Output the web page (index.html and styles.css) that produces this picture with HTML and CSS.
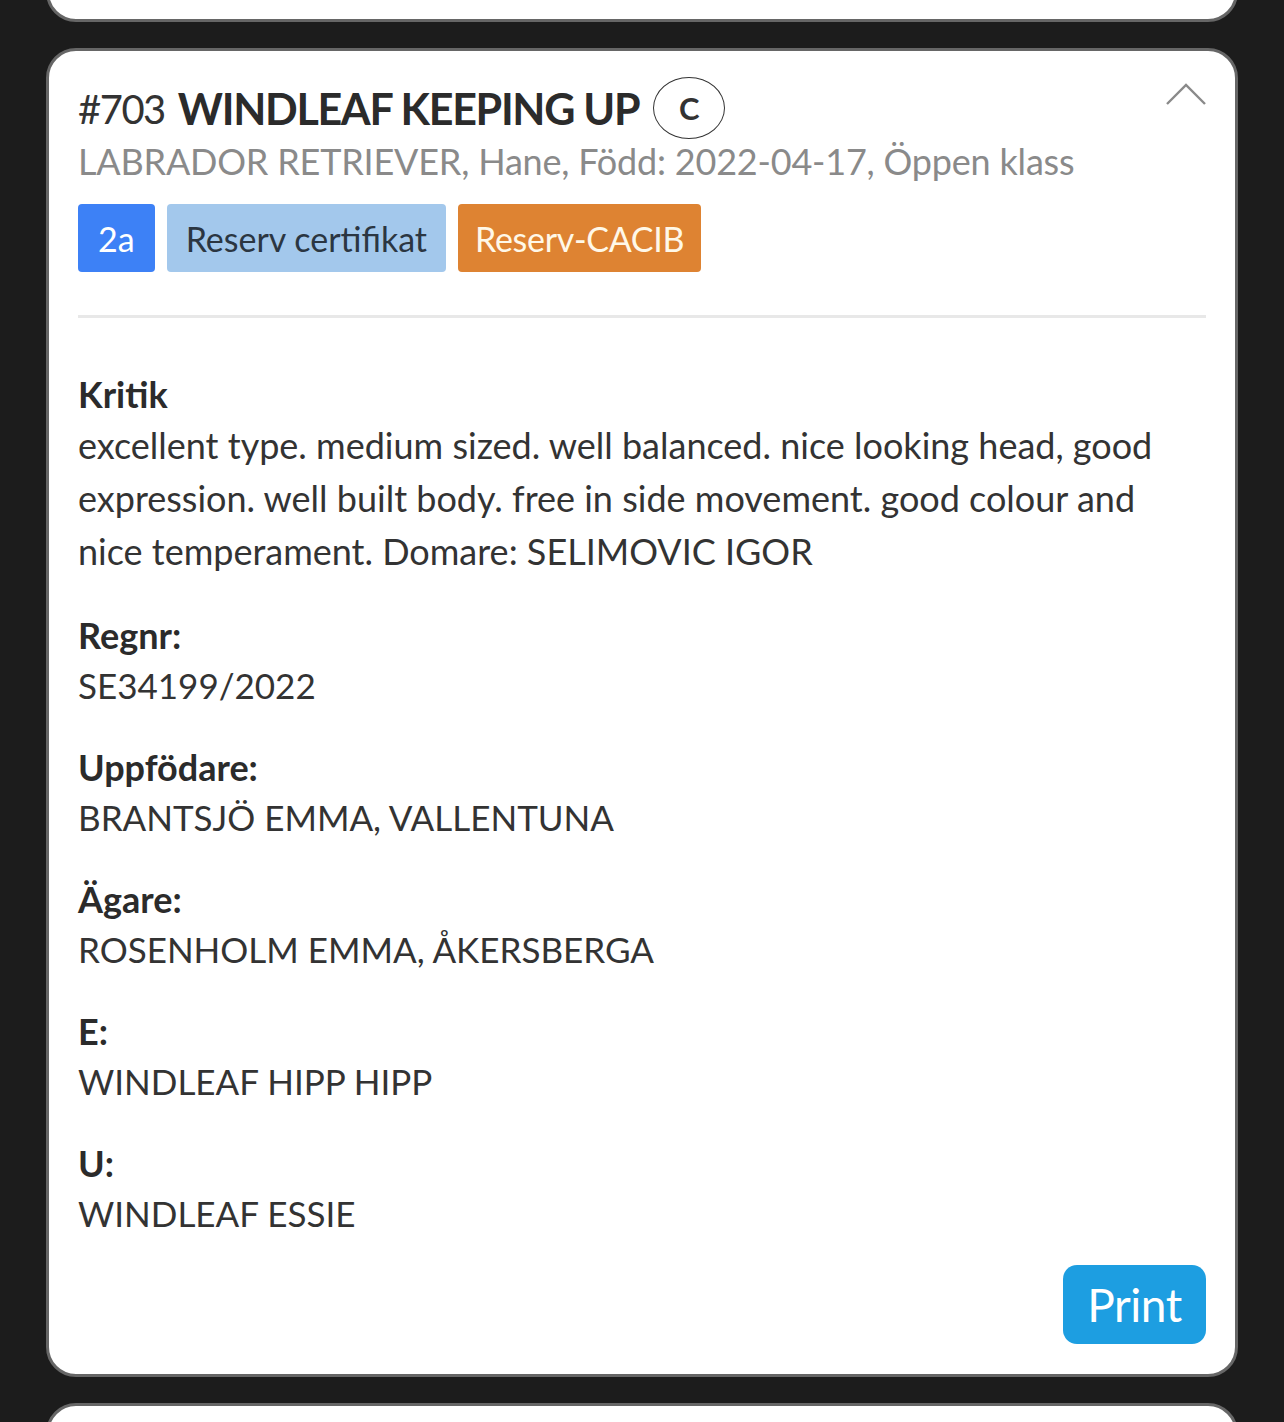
FILE: index.html
```html
<!DOCTYPE html>
<html lang="sv">
<head>
<meta charset="utf-8">
<title>Resultat</title>
<link rel="stylesheet" href="styles.css">
</head>
<body>
<main class="feed">
<div class="card card-prev"></div>

<article class="card">
  <header class="head">
    <div class="head-main">
      <h1 class="title"><span class="num">#703</span><span class="name">WINDLEAF KEEPING UP</span><span class="pill">C</span></h1>
      <p class="sub">LABRADOR RETRIEVER, Hane, Född: 2022-04-17, Öppen klass</p>
    </div>
    <svg class="chev" width="40" height="22" viewBox="0 0 40 22" aria-hidden="true"><polyline points="1,21 20,2 39,21" fill="none" stroke="#8a8a8a" stroke-width="2.4"/></svg>
  </header>

  <div class="badges">
    <span class="badge b-blue">2a</span>
    <span class="badge b-light">Reserv certifikat</span>
    <span class="badge b-orange">Reserv-CACIB</span>
  </div>

  <hr class="divider">

  <div class="details">
    <section class="field kritik">
      <h2 class="label">Kritik</h2>
      <p class="text">excellent type. medium sized. well balanced. nice looking head, good expression. well built body. free in side movement. good colour and nice temperament. Domare: SELIMOVIC IGOR</p>
    </section>
    <section class="field">
      <h2 class="label">Regnr:</h2>
      <p class="value">SE34199/2022</p>
    </section>
    <section class="field">
      <h2 class="label">Uppfödare:</h2>
      <p class="value">BRANTSJÖ EMMA, VALLENTUNA</p>
    </section>
    <section class="field">
      <h2 class="label">Ägare:</h2>
      <p class="value">ROSENHOLM EMMA, ÅKERSBERGA</p>
    </section>
    <section class="field">
      <h2 class="label">E:</h2>
      <p class="value">WINDLEAF HIPP HIPP</p>
    </section>
    <section class="field">
      <h2 class="label">U:</h2>
      <p class="value">WINDLEAF ESSIE</p>
    </section>
  </div>

  <div class="actions">
    <button class="print" type="button">Print</button>
  </div>
</article>

<div class="card card-next"></div>
</main>
</body>
</html>
```

FILE: styles.css
```css
html, body {
  margin: 0;
  padding: 0;
  background: #1c1c1c;
  height: 1422px;
  overflow: hidden;
}
body {
  font-family: "Lato", "Liberation Sans", sans-serif;
  color: #333;
}
.feed {
  height: 1422px;
  overflow: hidden;
  padding: 0 46px;
}
.card {
  background: #fff;
  border: 3px solid #666;
  border-radius: 30px;
  box-sizing: border-box;
  padding: 26px 29px 30px 29px;
  margin-bottom: 26px;
}
.card-prev {
  height: 82px;
  margin-top: -60px;
  padding: 0;
}
.card-next {
  height: 60px;
  padding: 0;
  margin-bottom: 0;
}
.head {
  display: flex;
  justify-content: space-between;
  align-items: flex-start;
}
.title {
  margin: 0;
  display: flex;
  align-items: center;
  height: 62px;
  font-weight: 400;
}
.num {
  font-size: 40px;
  font-weight: 400;
  letter-spacing: -1.5px;
  color: #333;
  margin-top: 2px;
}
.name {
  margin-left: 13px;
  font-size: 43px;
  font-weight: 700;
  letter-spacing: -1.3px;
  color: #2b2b2b;
}
.pill {
  margin-left: 14px;
  width: 70px;
  height: 60px;
  border: 1.5px solid #333;
  border-radius: 50%;
  display: flex;
  align-items: center;
  justify-content: center;
  font-size: 31px;
  font-weight: 700;
  color: #333;
}
.sub {
  margin: 0;
  font-size: 36px;
  letter-spacing: -0.2px;
  line-height: 44px;
  color: #8a8a8a;
}
.chev {
  margin-top: 6px;
}
.badges {
  display: flex;
  gap: 12px;
  margin-top: 21px;
}
.badge {
  height: 68px;
  display: flex;
  align-items: center;
  padding: 0 19px;
  border-radius: 4px;
  font-size: 34px;
}
.b-blue { background: #3d81f6; color: #fff; padding: 0 20px; }
.b-light { background: #a3c8ec; color: #2b3642; }
.b-orange { background: #de8332; color: #fff8e8; padding: 0 17px; letter-spacing: -0.3px; }
.divider {
  border: 0;
  border-top: 3px solid #e8e8e8;
  margin: 43px 0 0;
}
.details {
  display: flex;
  flex-direction: column;
  gap: 32px;
  margin-top: 51px;
}
.field { margin: 0; }
.label {
  margin: 0;
  font-size: 36px;
  line-height: 50px;
  font-weight: 700;
  color: #2b2b2b;
}
.text {
  margin: 0;
  font-size: 36px;
  line-height: 53px;
}
.value {
  margin: 0;
  font-size: 35px;
  line-height: 50px;
}
.actions {
  display: flex;
  justify-content: flex-end;
  margin-top: 27px;
}
.print {
  border: 0;
  border-radius: 14px;
  background: #1d9ee1;
  color: #fff;
  font-family: inherit;
  font-size: 46px;
  letter-spacing: -0.5px;
  height: 79px;
  width: 143px;
  padding: 0;
}
```
